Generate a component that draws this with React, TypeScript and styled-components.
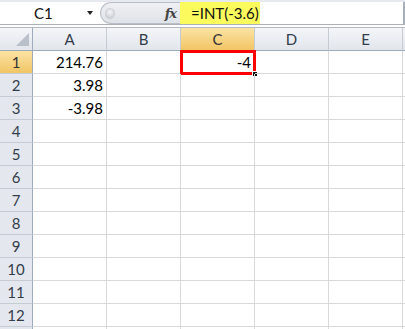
import React from "react";
import styled, { createGlobalStyle, css } from "styled-components";

const Global = createGlobalStyle`
  html, body { margin: 0; padding: 0; background: #fff; }
  body { font-family: Lato, "Open Sans", sans-serif; overflow: hidden; }
`;

const Page = styled.div`
  width: 405px;
  height: 329px;
  overflow: hidden;
  background: #fff;
`;

const FormulaBar = styled.div`
  display: flex;
  height: 22px;
  border-top: 2px solid #e6e9ee;
  border-bottom: 1px solid #a9b0ba;
`;

const NameBox = styled.div`
  width: 100px;
  display: flex;
  align-items: center;
  background: #fff;
  font-size: 15px;
  color: #111;
  position: relative;
`;

const NameText = styled.span`
  margin-left: 34px;
  flex: 1;
`;

const DropArrow = styled.span`
  width: 0;
  height: 0;
  margin-right: 7px;
  border-left: 3.5px solid transparent;
  border-right: 3.5px solid transparent;
  border-top: 4px solid #222;
`;

const Divider = styled.div`
  width: 80px;
  display: flex;
  align-items: center;
  background: linear-gradient(#eef0f3, #dfe2e7);
  border: 1px solid #b9bfc8;
  border-right: none;
  border-radius: 12px 0 0 12px;
  box-sizing: border-box;
`;

const Knob = styled.span`
  width: 8px;
  height: 9px;
  margin-left: 4px;
  border-radius: 50%;
  background: radial-gradient(circle at 50% 35%, #f4f5f7, #c1c6cd);
  border: 1px solid #cdd1d7;
`;

const Fx = styled.span`
  margin-left: auto;
  margin-right: 4px;
  font-family: "DejaVu Serif", "Liberation Serif", serif;
  font-style: italic;
  font-weight: bold;
  font-size: 13px;
  color: #444;
  letter-spacing: -1px;
`;

const FormulaInput = styled.div`
  flex: 1;
  display: flex;
  background: #fff;
  border-right: 2px solid #a9b0ba;
`;

const Highlight = styled.div`
  width: 80px;
  background: #fbfb5e;
  display: flex;
  align-items: center;
  padding-left: 11px;
  box-sizing: border-box;
  font-size: 15px;
  color: #111;
`;

const Gap = styled.div`
  height: 2px;
  background: #fff;
  border-bottom: 1px solid #b4bac3;
`;

const Grid = styled.div`
  display: grid;
  grid-template-columns: 33px repeat(5, 74px) 1fr;
  grid-auto-rows: 23px;
`;

const selectedHeader = css`
  background: linear-gradient(#fbe3a4, #f2c565);
  color: #333;
`;

const ColHead = styled.div<{ $sel?: boolean }>`
  display: flex;
  align-items: center;
  justify-content: center;
  background: linear-gradient(#f3f5f8, #e2e6ec);
  border-right: 1px solid #c5cbd3;
  border-bottom: 1px solid #9eabbb;
  font-size: 15px;
  color: #333d4a;
  box-sizing: border-box;
  ${(p) => p.$sel && selectedHeader}
`;

const Corner = styled(ColHead)`
  position: relative;
  border-right: 1px solid #9eabbb;
  &::after {
    content: "";
    position: absolute;
    right: 3px;
    bottom: 4px;
    width: 0;
    height: 0;
    border-left: 13px solid transparent;
    border-bottom: 13px solid #b9c0ca;
  }
`;

const RowHead = styled.div<{ $sel?: boolean }>`
  display: flex;
  align-items: center;
  justify-content: center;
  background: #e4e8ee;
  border-right: 1px solid #9eabbb;
  border-bottom: 1px solid #c5cbd3;
  font-size: 15px;
  color: #333d4a;
  box-sizing: border-box;
  ${(p) => p.$sel && selectedHeader}
`;

const Cell = styled.div<{ $active?: boolean }>`
  position: relative;
  display: flex;
  align-items: center;
  justify-content: flex-end;
  padding-right: 3px;
  border-right: 1px solid #d9d9d9;
  border-bottom: 1px solid #d9d9d9;
  box-sizing: border-box;
  font-size: 15px;
  color: #000;
  ${(p) =>
    p.$active &&
    css`
      &::before {
        content: "";
        position: absolute;
        left: -1px;
        top: -1px;
        right: -2px;
        bottom: -2px;
        border: 3px solid #ff0000;
        pointer-events: none;
      }
      &::after {
        content: "";
        position: absolute;
        right: -3px;
        bottom: -3px;
        width: 4px;
        height: 4px;
        background: #111;
        border: 1px solid #fff;
        box-sizing: content-box;
        transform: translate(1px, 1px);
      }
    `}
`;

const cols = ["A", "B", "C", "D", "E"];
const data: Record<string, string> = {
  A1: "214.76",
  A2: "3.98",
  A3: "-3.98",
  C1: "-4",
};

export default function App() {
  const rows = Array.from({ length: 13 }, (_, i) => i + 1);
  return (
    <Page>
      <Global />
      <FormulaBar>
        <NameBox>
          <NameText>C1</NameText>
          <DropArrow />
        </NameBox>
        <Divider>
          <Knob />
          <Fx>fx</Fx>
        </Divider>
        <FormulaInput>
          <Highlight>=INT(-3.6)</Highlight>
        </FormulaInput>
      </FormulaBar>
      <Gap />
      <Grid>
        <Corner />
        {cols.map((c) => (
          <ColHead key={c} $sel={c === "C"}>
            {c}
          </ColHead>
        ))}
        <ColHead />
        {rows.map((r) => (
          <React.Fragment key={r}>
            <RowHead $sel={r === 1}>{r}</RowHead>
            {cols.map((c) => (
              <Cell key={c} $active={c === "C" && r === 1}>
                {data[c + r] ?? ""}
              </Cell>
            ))}
            <Cell />
          </React.Fragment>
        ))}
      </Grid>
    </Page>
  );
}
